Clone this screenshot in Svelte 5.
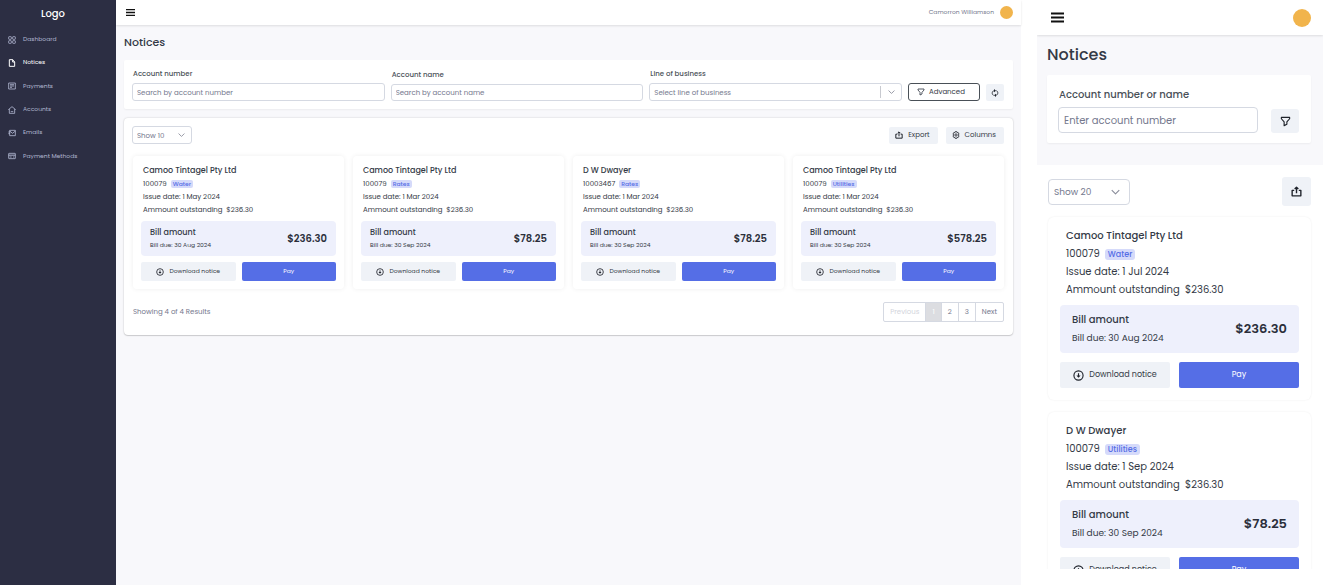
<script>
  const navItems = [
    { label: 'Dashboard', icon: 'grid' },
    { label: 'Notices', icon: 'file', active: true },
    { label: 'Payments', icon: 'list' },
    { label: 'Accounts', icon: 'home' },
    { label: 'Emails', icon: 'mail' },
    { label: 'Payment Methods', icon: 'card' }
  ];

  const notices = [
    { name: 'Camoo Tintagel Pty Ltd', account: '100079', type: 'Water', issued: '1 May 2024', owing: '$236.30', due: '30 Aug 2024', bill: '$236.30' },
    { name: 'Camoo Tintagel Pty Ltd', account: '100079', type: 'Rates', issued: '1 Mar 2024', owing: '$236.30', due: '30 Sep 2024', bill: '$78.25' },
    { name: 'D W Dwayer', account: '10003467', type: 'Rates', issued: '1 Mar 2024', owing: '$236.30', due: '30 Sep 2024', bill: '$78.25' },
    { name: 'Camoo Tintagel Pty Ltd', account: '100079', type: 'Utilities', issued: '1 Mar 2024', owing: '$236.30', due: '30 Sep 2024', bill: '$578.25' }
  ];

  const mobileNotices = [
    { name: 'Camoo Tintagel Pty Ltd', account: '100079', type: 'Water', issued: '1 Jul 2024', owing: '$236.30', due: '30 Aug 2024', bill: '$236.30' },
    { name: 'D W Dwayer', account: '100079', type: 'Utilities', issued: '1 Sep 2024', owing: '$236.30', due: '30 Sep 2024', bill: '$78.25' }
  ];
</script>

{#snippet icon(name)}
  <svg class="icon" viewBox="0 0 24 24" fill="none" stroke="currentColor" stroke-width="2.5" stroke-linejoin="round" aria-hidden="true">
    {#if name === 'grid'}
      <rect x="2" y="2" width="8" height="8" rx="1.5" /><rect x="14" y="2" width="8" height="8" rx="1.5" />
      <rect x="2" y="14" width="8" height="8" rx="1.5" /><rect x="14" y="14" width="8" height="8" rx="1.5" />
    {:else if name === 'file'}
      <path stroke-width="3" d="M4 2h10l6 7v13H4zM14 2v7h6" />
    {:else if name === 'list'}
      <path d="M2 3h20v18H2zM6 8h12M6 12h12M6 16h6" />
    {:else if name === 'home'}
      <path d="M1 11 12 2l11 9M4 9v13h16V9M8 15c1 3 7 3 8 0" />
    {:else if name === 'mail'}
      <path d="M5 4h17v16H5zM5 6l8.500 7L22 6M1 9h6M1 14h5" />
    {:else if name === 'card'}
      <rect x="2" y="4" width="20" height="16" rx="1" /><path stroke-width="3" d="M2 9.500h20" /><path d="M5 15h6M15 15h4" />
    {:else if name === 'menu'}
      <path stroke-width="3.500" d="M0 4.500h24M0 12h24M0 19.500h24" />
    {:else if name === 'filter'}
      <path d="M3 3h18v3l-6 7v5l-6 3v-8L3 6z" />
    {:else if name === 'refresh'}
      <path d="M9 5C2 7 2 17 8 19M15 19c7-2 7-12 1-14" stroke-width="2.500" /><path d="M9 0l6 5-6 5zM15 14l-6 5 6 5z" fill="currentColor" stroke="none" />
    {:else if name === 'export'}
      <path stroke-width="3" d="M7 9.500H2.500v12h19v-12H17M12 16V3M8 6.500 12 2.500l4 4" />
    {:else if name === 'gear'}
      <path stroke-width="2.500" d="M9.500 2h5l1 3 3-.5 2.500 4.500-2 3 2 3-2.500 4.500-3-.5-1 3h-5l-1-3-3 .5L3 15l2-3-2-3 2.500-4.500 3 .5z" /><circle cx="12" cy="12" r="3.500" stroke-width="2.500" />
    {:else if name === 'download'}
      <circle cx="12" cy="12" r="10" stroke-width="2.500" /><path d="M12 7v8" stroke-width="2.500" /><path d="M7.500 12h9L12 17z" fill="currentColor" stroke="none" />
    {:else if name === 'chevron'}
      <path stroke-width="3" d="M2 7l10 10L22 7" />
    {/if}
  </svg>
{/snippet}

{#snippet noticeCard(n)}
  <article class="notice">
    <div class="details">
      <h2>{n.name}</h2>
      <p class="account">{n.account}<span class="tag">{n.type}</span></p>
      <p>Issue date: {n.issued}</p>
      <p>Ammount outstanding &nbsp;{n.owing}</p>
    </div>
    <div class="bill">
      <div>
        <h3>Bill amount</h3>
        <p>Bill due: {n.due}</p>
      </div>
      <strong>{n.bill}</strong>
    </div>
    <div class="actions">
      <button class="soft" type="button">{@render icon('download')}Download notice</button>
      <button class="primary" type="button">Pay</button>
    </div>
  </article>
{/snippet}

<div class="page">
  <aside class="sidebar">
    <div class="logo">Logo</div>
    <nav>
      {#each navItems as item}
        <a href="#{item.icon}" class:active={item.active}>{@render icon(item.icon)}{item.label}</a>
      {/each}
    </nav>
  </aside>

  <main class="desktop">
    <header class="topbar">
      <button class="menu" type="button" aria-label="Menu">{@render icon('menu')}</button>
      <div class="user">Camorron Williamson<span class="avatar"></span></div>
    </header>
    <div class="content">
      <h1>Notices</h1>
      <form class="filters">
        <div class="field">
          <label for="account-number">Account number</label>
          <input id="account-number" type="text" placeholder="Search by account number" />
        </div>
        <div class="field">
          <label for="account-name">Account name</label>
          <input id="account-name" class="short" type="text" placeholder="Search by account name" />
        </div>
        <div class="field">
          <label for="business">Line of business</label>
          <div class="select divided">
            <select id="business"><option>Select line of business</option></select>
            {@render icon('chevron')}
          </div>
        </div>
        <button class="outline" type="button">{@render icon('filter')}Advanced</button>
        <button class="soft square" type="button" aria-label="Reset">{@render icon('refresh')}</button>
      </form>

      <section class="panel">
        <div class="toolbar">
          <div class="select show">
            <select aria-label="Rows shown"><option>Show 10</option></select>
            {@render icon('chevron')}
          </div>
          <button class="soft" type="button">{@render icon('export')}Export</button>
          <button class="soft" type="button">{@render icon('gear')}Columns</button>
        </div>
        <div class="cards">
          {#each notices as n}{@render noticeCard(n)}{/each}
        </div>
        <div class="footer">
          <span>Showing 4 of 4 Results</span>
          <div class="pager">
            <button type="button" disabled>Previous</button>
            <button class="current" type="button">1</button>
            <button type="button">2</button>
            <button type="button">3</button>
            <button type="button">Next</button>
          </div>
        </div>
      </section>
    </div>
  </main>

  <section class="mobile">
    <div class="upper">
      <header class="topbar">
        <button class="menu" type="button" aria-label="Menu">{@render icon('menu')}</button>
        <span class="avatar"></span>
      </header>
      <h1>Notices</h1>
      <form class="filters">
        <div class="field">
          <label for="account-any">Account number or name</label>
          <input id="account-any" type="text" placeholder="Enter account number" />
        </div>
        <button class="soft square" type="button" aria-label="Filter">{@render icon('filter')}</button>
      </form>
    </div>
    <div class="lower">
      <div class="toolbar">
        <div class="select show">
          <select aria-label="Rows shown"><option>Show 20</option></select>
          {@render icon('chevron')}
        </div>
        <button class="soft square" type="button" aria-label="Export">{@render icon('export')}</button>
      </div>
      <div class="cards">
        {#each mobileNotices as n}{@render noticeCard(n)}{/each}
      </div>
    </div>
  </section>
</div>

<style>
  :global(body) { background: #fff; }
  .page, .page * { box-sizing: border-box; }
  .page {
    display: flex;
    height: 100vh;
    overflow: hidden;
    font-family: Poppins, Inter, sans-serif;
    color: #343a46;
  }
  h1, h2, h3, p { margin: 0; font-weight: 400; }
  button, input, select { font: inherit; color: inherit; margin: 0; }
  button { border: 0; background: none; padding: 0; }
  .icon { width: var(--icon); height: var(--icon); flex: none; display: block; }

  /* Sidebar */
  .sidebar { --icon: 8px; flex: none; width: 116px; background: #2c2e43; }
  .logo { height: 28px; padding-right: 10px; line-height: 27px; text-align: center; font-size: 10px; font-weight: 500; color: #fff; }
  nav { display: grid; grid-auto-rows: 1fr; height: 140px; }
  nav a { display: flex; align-items: center; gap: 7px; padding-left: 8px; font-size: 6px; color: #b0b6d0; text-decoration: none; }
  nav a.active { color: #fff; }

  /* Sizes for each pane */
  .desktop {
    --icon: 8px; --text: 7px; --small: 6px; --action: 6px; --title: 8px; --line: 13px; --total: 10px;
    --pad: 8px; --inset: 2px; --radius: 3px; --bill: 35px; --button: 19px; --gap: 6px;
    flex: 1; min-width: 0; background: #f8f8fb; font-size: 7px;
  }
  .mobile {
    --icon: 11px; --text: 10px; --small: 9px; --action: 8px; --title: 10px; --line: 18px; --total: 13px;
    --pad: 12px; --inset: 6px; --radius: 4px; --bill: 48px; --button: 26px; --gap: 9px;
    flex: none; width: 286px; height: calc(100vh - 16px); margin-left: 16px; overflow: hidden; font-size: 10px;
  }

  .topbar { display: flex; justify-content: space-between; align-items: center; background: #fff; box-shadow: 0 1px 2px #0000001c; }
  .desktop .topbar { height: 25px; padding: 0 8px 0 10px; }
  .mobile .topbar { height: 35px; padding: 0 12px 0 14px; }
  .menu { color: #111; }
  .desktop .menu { --icon: 9px; }
  .mobile .menu { --icon: 13px; }
  .user { display: flex; align-items: center; gap: 6px; font-size: 6px; color: #74788d; }
  .avatar { width: 13px; height: 13px; border-radius: 50%; background: #f1b44c; }
  .mobile .avatar { width: 18px; height: 18px; }

  .content { padding: 0 8px; }
  h1 { font-weight: 500; color: #343a46; }
  .desktop h1 { font-size: 11px; line-height: 35px; }
  .mobile h1 { padding-left: 10px; font-size: 16px; line-height: 40px; }

  /* Filters */
  .filters { display: flex; align-items: flex-end; background: #fff; border-radius: 2px; box-shadow: 0 1px 2px #0000000d; }
  .desktop .filters { gap: 6px; height: 49px; padding: 8px 9px 8px 8px; }
  .mobile .filters { gap: 13px; height: 68px; margin: 0 12px 0 10px; padding: 10px 12px 10px 11px; }
  .field { flex: 1; min-width: 0; }
  label { display: block; font-weight: 500; color: #495057; }
  .desktop label { line-height: 10px; margin: 0 1px 4px; }
  .mobile label { line-height: 14px; margin: 0 1px 5px; }
  input, select {
    display: block; width: 100%; appearance: none; background: #fff;
    border: 1px solid #d5d9e2; border-radius: var(--radius); color: #74788d;
    height: 18px; padding: 1px 4px 0; outline: 0;
  }
  input.short { height: 17px; }
  .mobile input, .mobile select { height: 26px; padding: 1px 5px 0; }
  input::placeholder { color: #74788d; opacity: 1; }
  .select { position: relative; }
  .select .icon { --icon: 7px; position: absolute; right: 7px; top: 50%; translate: 0 -50%; color: #8a8d9a; pointer-events: none; }
  .mobile .select .icon { --icon: 9px; right: 10px; }
  .divided::after { content: ''; position: absolute; right: 21px; top: 3px; bottom: 3px; width: 1px; background: #c8cad0; }

  .soft { display: flex; align-items: center; justify-content: center; background: #eff2f7; border-radius: 2px; }
  .outline { display: flex; align-items: center; gap: 4px; width: 72px; height: 18px; padding-left: 8px; border: 1px solid #495057; border-radius: 3px; }
  .desktop .square { width: 18px; height: 17px; }
  .mobile .square { width: 28px; height: 24px; border-radius: 3px; }

  /* List */
  .panel { margin-top: 9px; padding: 8px 9px 8px 8px; background: #fff; border-radius: 4px; box-shadow: 0 0 2px #0003, 0 1px 1px #0002; }
  .toolbar { display: flex; align-items: center; }
  .soft .icon { color: #1f232b; }
  .show { margin-right: auto; }
  .desktop .show { width: 60px; }
  .mobile .show { width: 82px; font-size: 9px; }
  .desktop .toolbar .soft { gap: 5px; height: 17px; padding: 0 8px 0 6px; margin-left: 8px; }
  .lower { padding: 12px 12px 0 11px; background: #fff; }
  .upper { height: 165px; background: #f8f8fb; }
  .mobile .toolbar .square { width: 29px; height: 29px; }

  .cards { display: grid; }
  .desktop .cards { grid-template-columns: repeat(4, 1fr); gap: 9px; margin: 12px 0 0 1px; }
  .mobile .cards { gap: 12px; margin-top: 11px; }
  .notice { padding: var(--pad); border-radius: 4px; background: #fff; box-shadow: 0 0 5px #00000012; }
  .mobile .notice { padding-top: 10px; border-radius: 6px; box-shadow: 0 0 2px #00000014; }
  .details { padding: 0 var(--inset) 5px; font-size: var(--text); line-height: var(--line); }
  .mobile .details { padding-bottom: 6px; }
  h2 { font-size: var(--title); line-height: var(--line); font-weight: 500; }
  .account { display: flex; align-items: center; gap: 4px; }
  .mobile .account { gap: 5px; }
  .tag { padding: 0 2px; border-radius: 2px; background: #d5dafa; color: #556ee6; font-size: 6px; line-height: 8px; font-weight: 500; }
  .mobile .tag { padding: 0 3px; border-radius: 3px; font-size: 8px; line-height: 11px; }
  .bill { display: flex; justify-content: space-between; align-items: center; height: var(--bill); padding: 0 9px; border-radius: 4px; background: #eef0fc; }
  .mobile .bill { padding: 0 12px; }
  h3 { font-size: var(--title); font-weight: 500; line-height: var(--line); }
  .bill p { font-size: var(--small); line-height: var(--line); }
  .bill strong { font-size: var(--total); font-weight: 600; color: #2a2e3a; }
  .actions { display: grid; grid-template-columns: 1fr 1fr; gap: var(--gap); margin-top: var(--gap); }
  .mobile .actions { grid-template-columns: 11fr 12fr; }
  .actions button { height: var(--button); font-size: var(--action); border-radius: 2px; }
  .actions .soft { gap: 5px; }
  .primary { background: #556ee6; color: #fff; }

  .footer { display: flex; justify-content: space-between; align-items: center; margin: 13px 0 0 1px; padding-bottom: 5px; color: #74788d; }
  .pager { display: flex; border: 1px solid #d5d9e2; border-radius: 2px; }
  .pager button { height: 18px; padding: 0 6px; }
  .pager button + button { border-left: 1px solid #d5d9e2; }
  .pager button:disabled { color: #d3d5dc; }
  .pager .current { background: #dcdde1; color: #fff; }
</style>
